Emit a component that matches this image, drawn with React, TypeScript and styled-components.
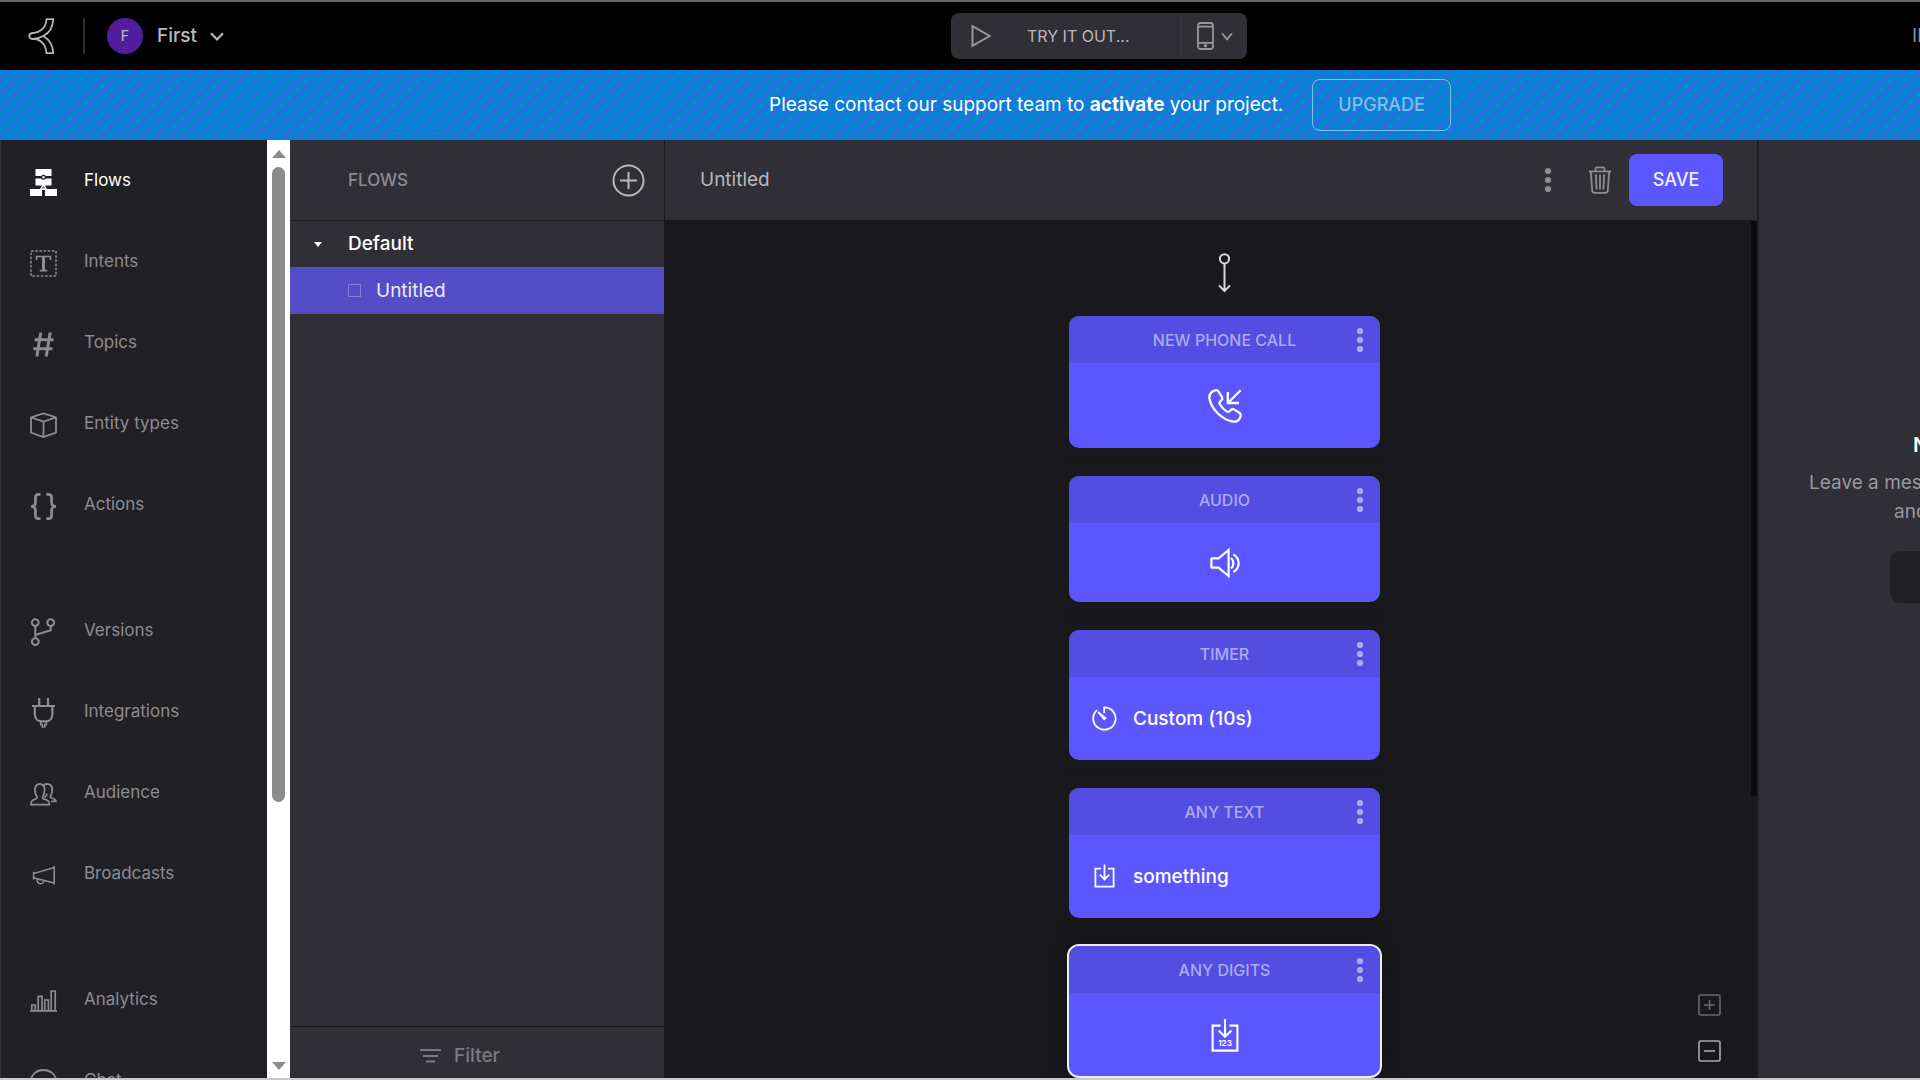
import React from 'react';
import styled, { createGlobalStyle, css } from 'styled-components';

const color = {
  black: '#000000',
  rail: '#212025',
  panel: '#302f35',
  canvas: '#19181c',
  line: '#19181d',
  muted: '#8d8c91',
  soft: '#b9b8bd',
  white: '#ffffff',
  accent: '#5c56ff',
  accentDark: '#534de1',
  selected: '#534dc8',
  banner: '#0086d1',
  stripe: '#2a6ee0',
};

const GlobalStyle = createGlobalStyle`
  * { box-sizing: border-box; }
  body {
    margin: 0;
    background: ${color.panel};
    font-family: Inter, "Liberation Sans", sans-serif;
    font-size: 17px;
    line-height: 24px;
    color: ${color.muted};
  }
  button, input { font: inherit; color: inherit; }
  button { border: 0; padding: 0; background: none; cursor: pointer; }
  svg { display: block; flex: none; }
`;

const Page = styled.div`
  display: flex;
  flex-direction: column;
  height: 100vh;
  overflow: hidden;
  border-top: 2px solid #66666a;
  border-bottom: 2px solid #c9c8ca;
`;

const TopBar = styled.header`
  display: flex;
  align-items: center;
  flex: none;
  height: 68px;
  background: ${color.black};
  overflow: hidden;
`;

const Brand = styled.div`
  display: flex;
  align-items: center;
  flex: 0 0 calc(50% - 9px);
  padding-left: 28px;
`;

const Divider = styled.span`
  width: 2px;
  height: 36px;
  margin: 0 22px 0 28px;
  background: #2c2b30;
`;

const ProjectButton = styled.button`
  display: flex;
  align-items: center;
  color: ${color.soft};
  font-size: 19px;
  font-weight: 500;
`;

const Avatar = styled.span`
  display: flex;
  align-items: center;
  justify-content: center;
  width: 36px;
  height: 36px;
  margin-right: 14px;
  border-radius: 50%;
  background: #511d9b;
  font-size: 14px;
`;

const ChevronGap = styled.span`
  margin-left: 13px;
`;

const TryGroup = styled.div`
  display: flex;
  flex: none;
  height: 46px;
  border-radius: 8px;
  background: ${color.panel};
  overflow: hidden;
`;

const TryButton = styled.button`
  display: flex;
  align-items: center;
  gap: 35px;
  width: 230px;
  padding-left: 20px;
  color: ${color.soft};
  font-size: 16px;

  svg { color: #98979c; }
`;

const DeviceButton = styled.button`
  display: flex;
  align-items: center;
  justify-content: center;
  gap: 7px;
  width: 66px;
  border-left: 1px solid #3a393f;
  color: #98979c;
`;

const Region = styled.div`
  flex: 0 0 8px;
  min-width: 0;
  margin-left: auto;
  white-space: nowrap;
  font-size: 19px;
`;

const Banner = styled.div`
  display: flex;
  align-items: center;
  justify-content: center;
  gap: 29px;
  flex: none;
  height: 70px;
  padding-left: 300px;
  color: ${color.white};
  font-size: 19px;
  background: repeating-linear-gradient(
    135deg,
    ${color.banner} 0 6px,
    ${color.stripe} 6px 10px
  );
`;

const UpgradeButton = styled.button`
  height: 52px;
  padding: 0 25px;
  border: 1px solid #80c2ea;
  border-radius: 8px;
  color: #80bfec;
  font-size: 18px;
  font-weight: 500;
`;

const Workspace = styled.div`
  display: flex;
  flex: 1;
  min-height: 0;
`;

const Rail = styled.aside`
  display: flex;
  flex: 0 0 290px;
  background: ${color.rail};
`;

const Nav = styled.nav`
  flex: 1;
  border-left: 1px solid #35343a;
  overflow: hidden;
`;

const NavGroup = styled.div`
  display: flex;
  flex-direction: column;
  margin-bottom: 45px;
`;

const NavLink = styled.a<{ $active?: boolean }>`
  display: flex;
  align-items: center;
  gap: 27px;
  height: 81px;
  padding: 0 0 1px 29px;
  color: ${(p) => (p.$active ? color.white : color.muted)};
  text-decoration: none;

  svg { margin-top: 4px; }
`;

const Scroller = styled.div`
  display: flex;
  flex-direction: column;
  align-items: center;
  width: 23px;
  padding: 10px 0 8px;
  background: ${color.white};
`;

const ScrollArrow = styled.span<{ $down?: boolean }>`
  border: 7px solid transparent;
  ${(p) =>
    p.$down
      ? css`border-top: 8px solid #8b8b8b; border-bottom: 0; margin-top: auto;`
      : css`border-bottom: 8px solid #8b8b8b; border-top: 0;`}
`;

const ScrollThumb = styled.span`
  width: 13px;
  height: 69%;
  margin-top: 9px;
  border-radius: 7px;
  background: #8b8b8b;
`;

const FlowsPanel = styled.section`
  display: flex;
  flex-direction: column;
  flex: 0 0 375px;
  background: ${color.panel};
  border-right: 1px solid ${color.line};
`;

const PanelHeader = styled.header`
  display: flex;
  align-items: center;
  justify-content: space-between;
  flex: none;
  height: 81px;
  padding: 0 19px 0 58px;
  border-bottom: 1px solid ${color.line};
`;

const PanelTitle = styled.h2`
  margin: 0;
  font-size: 17px;
  font-weight: 500;
`;

const AddButton = styled.button`
  color: ${color.soft};
`;

const FlowGroup = styled.button`
  display: flex;
  align-items: center;
  gap: 26px;
  height: 46px;
  padding-left: 24px;
  color: ${color.white};
  font-size: 19px;
  font-weight: 500;
`;

const FlowRow = styled.label`
  display: flex;
  align-items: center;
  gap: 15px;
  height: 47px;
  padding-left: 58px;
  background: ${color.selected};
  color: #ececf7;
  font-size: 19px;
`;

const FlowCheck = styled.input`
  appearance: none;
  width: 13px;
  height: 13px;
  margin: 0;
  border: 1px solid #837edc;
`;

const FilterButton = styled.button`
  display: flex;
  align-items: center;
  justify-content: center;
  gap: 13px;
  height: 52px;
  margin-top: auto;
  padding: 6px 34px 0 0;
  border-top: 1px solid ${color.line};
  color: #7b7a80;
  font-size: 19px;
  font-weight: 500;
`;

const Editor = styled.main`
  position: relative;
  display: flex;
  flex-direction: column;
  flex: 1;
  min-width: 0;
  background: ${color.canvas};
`;

const EditorHeader = styled.header`
  display: flex;
  align-items: center;
  flex: none;
  height: 80px;
  padding: 0 34px 0 35px;
  background: ${color.panel};
`;

const EditorTitle = styled.h1`
  flex: 1;
  margin: 0;
  color: ${color.soft};
  font-size: 19px;
  font-weight: 400;
`;

const ToolButton = styled.button`
  margin-right: 36px;
`;

const DeleteButton = styled.button`
  margin-right: 17px;
`;

const SaveButton = styled.button`
  width: 94px;
  height: 52px;
  border-radius: 8px;
  background: ${color.accent};
  color: #efeeff;
  font-size: 18px;
  font-weight: 500;
`;

const CanvasArea = styled.div`
  display: flex;
  justify-content: flex-end;
  flex: 1;
  min-height: 0;
  overflow: hidden;
`;

const NodeColumn = styled.div`
  display: flex;
  flex-direction: column;
  align-items: center;
  gap: 28px;
  flex: 1;
  padding: 33px 0 0 33px;
`;

const StartMark = styled.div`
  height: 35px;
  color: #d8d7da;
`;

const Node = styled.article<{ $selected?: boolean }>`
  flex: none;
  width: 311px;
  border-radius: 10px;
  background: ${color.accent};
  box-shadow: 0 0 16px rgba(30, 29, 30, 0.7);
  overflow: hidden;
  ${(p) => p.$selected && css`box-shadow: 0 0 0 2px #efeeee, 0 0 24px #111113;`}
`;

const NodeHead = styled.header`
  display: grid;
  grid-template-columns: 40px 1fr 40px;
  align-items: center;
  justify-items: center;
  height: 47px;
  background: ${color.accentDark};
  color: #aeaaf0;
`;

const NodeTitle = styled.h3`
  grid-column: 2;
  margin: 0;
  font-size: 16px;
  font-weight: 500;
`;

const NodeBody = styled.div<{ $height: number; $labelled?: boolean }>`
  display: flex;
  align-items: center;
  justify-content: ${(p) => (p.$labelled ? 'flex-start' : 'center')};
  gap: 16px;
  height: ${(p) => p.$height}px;
  padding: 0 23px;
  color: ${color.white};
  font-size: 19px;
  font-weight: 500;
`;

const CanvasThumb = styled.span`
  width: 6px;
  height: 67%;
  margin-top: 1px;
  background: #0b0a0f;
`;

const ZoomControls = styled.div`
  position: absolute;
  right: 36px;
  bottom: 16px;
  display: flex;
  flex-direction: column;
  gap: 24px;
`;

const ZoomButton = styled.button<{ $dim?: boolean }>`
  color: ${(p) => (p.$dim ? '#69686c' : '#a9a8ac')};
`;

const Comments = styled.aside`
  flex: 0 0 163px;
  padding-top: 290px;
  background: ${color.panel};
  border-left: 2px solid #222126;
  overflow: hidden;
  white-space: nowrap;
`;

const CommentsTitle = styled.h2`
  margin: 0 0 8px;
  padding-left: 154px;
  color: ${color.white};
  font-size: 20px;
  font-weight: 600;
  line-height: 30px;
`;

const CommentsLine = styled.p<{ $indent: number }>`
  margin: 0;
  padding-left: ${(p) => p.$indent}px;
  font-size: 19px;
  line-height: 29px;
  color: #9a999e;
`;

const CommentsButton = styled.button`
  display: block;
  width: 176px;
  height: 52px;
  margin: 25px 0 0 131px;
  border-radius: 10px;
  background: ${color.rail};
`;

type IconProps = { w: number; h: number; sw?: number; children: React.ReactNode };

const Icon = ({ w, h, sw = 2, children }: IconProps) => (
  <svg width={w} height={h} viewBox={`0 0 ${w} ${h}`} fill="none" stroke="currentColor" strokeWidth={sw} aria-hidden="true">
    {children}
  </svg>
);

const Logo = () => (
  <Icon w={27} h={37} sw={1.8}>
    <g stroke="#b4b4b4">
      <path d="M18.5 1.2H25.2C25 10 21 15 15.3 18C21 21.5 25 27 25.2 35.2H18.5C18 27 13 21.2 6 21H4.5C.2 20.6 .2 15.4 4.5 15C13 14.5 18 9 18.5 1.2Z" />
      <path d="M5 21C9 21 12.5 19.6 15.3 18" />
    </g>
  </Icon>
);

const Chevron = ({ w = 14, h = 9, sw = 2.2 }: { w?: number; h?: number; sw?: number }) => (
  <Icon w={w} h={h} sw={sw}>
    <path d={`M1 1.2L${w / 2} ${h - 1.6}L${w - 1} 1.2`} />
  </Icon>
);

const Dots = () => (
  <Icon w={8} h={26} sw={0}>
    <g fill="currentColor">
      <circle cx="4" cy="4" r="3.1" />
      <circle cx="4" cy="13" r="3.1" />
      <circle cx="4" cy="22" r="3.1" />
    </g>
  </Icon>
);

const navIcons = {
  flows: (
    <Icon w={27} h={27} sw={0}>
      <g fill="currentColor">
        <path d="M5.5 0H21.5V7H5.5ZM5.5 9.5H21.5V16.5H5.5ZM0 20H12V27H0ZM15 20H27V27H15Z" />
        <path d="M12.9 15H14.1L17 20H15V21H12V20H10Z" />
      </g>
      <circle cx="13.5" cy="8.3" r="1.9" fill="#fff" stroke="#212025" strokeWidth="1.2" />
      <path d="M13.5 16.8L15.3 19.4H11.7Z" fill="#77767b" />
    </Icon>
  ),
  intents: (
    <Icon w={27} h={27} sw={1.5}>
      <path d="M1 1H26V26H1Z" strokeDasharray="2.6 1.57" />
      <path d="M6.5 10V6.5H20.5V10M13.5 6.5V20.5M9.8 20.6H17.2" strokeWidth="1.6" />
      <path d="M13.5 6.5V20.5" strokeWidth="3" />
    </Icon>
  ),
  topics: (
    <Icon w={27} h={27} sw={2.9}>
      <path d="M10.8 1.5L6.8 25.5M20.2 1.5L16.2 25.5M4.6 8.8H23.6M3.4 17.8H22.4" />
    </Icon>
  ),
  entity: (
    <Icon w={27} h={27} sw={1.8}>
      <path d="M13.5 1.4L26 5.4V20.6L13.5 25L1 20.6V5.4ZM1 5.4L13.5 9.6L26 5.4M13.5 9.6V25" />
    </Icon>
  ),
  actions: (
    <Icon w={27} h={27} sw={2.7}>
      <path d="M10.6 1.4H8.6Q5.4 1.4 5.4 4.6V9.8Q5.4 13.4 1 13.5Q5.4 13.6 5.4 17.2V22.4Q5.4 25.6 8.6 25.6H10.6M16.4 1.4H18.4Q21.6 1.4 21.6 4.6V9.8Q21.6 13.4 26 13.5Q21.6 13.6 21.6 17.2V22.4Q21.6 25.6 18.4 25.6H16.4" />
    </Icon>
  ),
  versions: (
    <Icon w={27} h={28} sw={2}>
      <circle cx="5.3" cy="4.6" r="3.4" />
      <circle cx="20.7" cy="4.6" r="3.4" />
      <circle cx="5.3" cy="23.6" r="3.4" />
      <path d="M5.3 8V20.2M20.7 8V12.2L5.3 17" />
    </Icon>
  ),
  integrations: (
    <Icon w={27} h={30} sw={2.2}>
      <path d="M9.2 0V7.5M18 0V7.5M2 8H25M4.8 8V15.5C4.8 20.5 7.6 23.3 11 23.3H16.2C19.6 23.3 22.4 20.5 22.4 15.5V8" />
      <path d="M10.8 23.6V26.6H12.4V29H14.8V26.6H16.4V23.6" strokeWidth="1.6" />
    </Icon>
  ),
  audience: (
    <Icon w={27} h={23} sw={1.8}>
      <path d="M1 21.6C1 18 2 17.4 5.4 16.2C7 15.6 7.4 14.8 6.8 13.6C5.4 11.6 5 9.4 5 6.8C5 3 6.6 1 9.8 1S14.6 3 14.6 6.8C14.6 9.4 14.2 11.6 12.8 13.6C12.2 14.8 12.6 15.6 14.2 16.2C18.4 17.4 19.4 18.4 19.4 21.6Z" />
      <path d="M13.8 2.2C14.8 1.3 16 1 17.4 1C20.6 1 22.2 3 22.2 6.8C22.2 9 21.8 11.2 20.6 12.8C20 14 20.4 14.6 21.8 15C25 16 26 16.6 26 18.4H21M16.6 10.6C17 13 15.6 14 14.4 14" />
    </Icon>
  ),
  broadcasts: (
    <Icon w={27} h={19} sw={1.6}>
      <path d="M24.2 0V18.6M24.2 1.6L3.6 7.6V11.8L24.2 17M3.6 5.8V13.4M6.9 12.6C6.9 19.4 14 19 13.8 14.4" />
    </Icon>
  ),
  analytics: (
    <Icon w={27} h={22} sw={1.7}>
      <path d="M0 20.8H27M1.8 20.8V15H5.2V20.8M8.2 20.8V6.4H12V20.8M14.8 20.8V10H18.4V20.8M21.2 20.8V1H25.2V20.8" />
    </Icon>
  ),
  chat: (
    <Icon w={27} h={27} sw={1.8}>
      <ellipse cx="13.5" cy="11.5" rx="12.5" ry="10.5" />
      <path d="M7 21L6 26L12 22" />
    </Icon>
  ),
};

type NavEntry = { label: string; icon: keyof typeof navIcons; active?: boolean };

const navGroups: NavEntry[][] = [
  [
    { label: 'Flows', icon: 'flows', active: true },
    { label: 'Intents', icon: 'intents' },
    { label: 'Topics', icon: 'topics' },
    { label: 'Entity types', icon: 'entity' },
    { label: 'Actions', icon: 'actions' },
  ],
  [
    { label: 'Versions', icon: 'versions' },
    { label: 'Integrations', icon: 'integrations' },
    { label: 'Audience', icon: 'audience' },
    { label: 'Broadcasts', icon: 'broadcasts' },
  ],
  [
    { label: 'Analytics', icon: 'analytics' },
    { label: 'Chat', icon: 'chat' },
  ],
];

const PhoneCallIcon = () => (
  <Icon w={34} h={34} sw={2.3}>
    <path d="M7.4 1.3C8.8 .9 9.8 1.4 10.6 2.6L14 8.2C14.8 9.6 14.2 10.6 13 11.6C11.4 12.8 11 14 12.2 15.8C13.8 18.6 15.8 20.6 18.6 22.4C20.2 23.4 21.2 23 22.4 21.6C23.4 20.2 24.6 19.6 26 20.4L31.6 24C32.6 24.8 33 25.8 32.6 27.2C31.6 31 28.8 33 25 32.6C13.8 30.6 3.2 20 1.4 9.2C1.2 5 3.4 2.2 7.4 1.3Z" />
    <path d="M32.6 1.2L20.6 13.2M19.8 3V14H31" />
  </Icon>
);

const SpeakerIcon = () => (
  <Icon w={30} h={30} sw={2.2}>
    <path d="M2 10.4H8.6L18.6 2V28L8.6 19.6H2Q1.4 19.6 1.4 19V11Q1.4 10.4 2 10.4Z" />
    <path d="M21 10C24.2 12.6 24.2 17.6 21 20.4M23.4 6.4C30.4 10.8 30.4 19.6 23.4 24" />
  </Icon>
);

const TimerIcon = () => (
  <Icon w={25} h={25} sw={1.8}>
    <path d="M12.2 7V1.3A11.2 11.2 0 1 1 4.9 4.2" />
    <path d="M6.2 6.2L12.2 13.2L13.4 12L6.2 6.2Z" fill="currentColor" />
  </Icon>
);

const InboxIcon = () => (
  <Icon w={25} h={25} sw={1.8}>
    <path d="M9 4.6H3.4V22.6H21.6V4.6H16M12.5 .6V15M7.8 10.6L12.5 15.4L17.2 10.6" />
  </Icon>
);

const DigitsText = styled.text`
  font-size: 8px;
  font-weight: 700;
  text-anchor: middle;
`;

const DigitsIcon = () => (
  <Icon w={28} h={34} sw={2.1}>
    <path d="M9.6 7.6H1.6V32.6H26.4V7.6H18.4M14 1V18M7.6 12.4L14 18.8L20.4 12.4" />
    <DigitsText x="14" y="28" fill="currentColor" stroke="none">123</DigitsText>
  </Icon>
);

type FlowNode = { title: string; height: number; icon: React.ReactNode; label?: string; selected?: boolean };

const flowNodes: FlowNode[] = [
  { title: 'NEW PHONE CALL', height: 85, icon: <PhoneCallIcon /> },
  { title: 'AUDIO', height: 79, icon: <SpeakerIcon /> },
  { title: 'TIMER', height: 83, icon: <TimerIcon />, label: 'Custom (10s)' },
  { title: 'ANY TEXT', height: 83, icon: <InboxIcon />, label: 'something' },
  { title: 'ANY DIGITS', height: 83, icon: <DigitsIcon />, selected: true },
];

export default function App() {
  return (
    <>
      <GlobalStyle />
      <Page>
        <TopBar>
          <Brand>
            <Logo />
            <Divider />
            <ProjectButton>
              <Avatar>F</Avatar>
              First
              <ChevronGap><Chevron /></ChevronGap>
            </ProjectButton>
          </Brand>
          <TryGroup>
            <TryButton>
              <Icon w={21} h={24}><path d="M1.5 2.2L18.6 12L1.5 21.8Z" /></Icon>
              TRY IT OUT...
            </TryButton>
            <DeviceButton aria-label="Device">
              <Icon w={17} h={28} sw={1.8}>
                <rect x="1" y="1" width="15" height="26" rx="2.5" />
                <path d="M1 4.6H16M1 20.8H16" />
                <circle cx="8.5" cy="23.8" r=".8" />
              </Icon>
              <Chevron w={12} h={9} sw={1.8} />
            </DeviceButton>
          </TryGroup>
          <Region>IP</Region>
        </TopBar>

        <Banner>
          <span>Please contact our support team to <strong>activate</strong> your project.</span>
          <UpgradeButton>UPGRADE</UpgradeButton>
        </Banner>

        <Workspace>
          <Rail>
            <Nav>
              {navGroups.map((group) => (
                <NavGroup key={group[0].label}>
                  {group.map((item) => (
                    <NavLink key={item.label} href="#" $active={item.active}>
                      {navIcons[item.icon]}
                      {item.label}
                    </NavLink>
                  ))}
                </NavGroup>
              ))}
            </Nav>
            <Scroller>
              <ScrollArrow />
              <ScrollThumb />
              <ScrollArrow $down />
            </Scroller>
          </Rail>

          <FlowsPanel>
            <PanelHeader>
              <PanelTitle>FLOWS</PanelTitle>
              <AddButton aria-label="Add flow">
                <Icon w={33} h={33}>
                  <circle cx="16.5" cy="16.5" r="15" />
                  <path d="M16.5 8V25M8 16.5H25" />
                </Icon>
              </AddButton>
            </PanelHeader>
            <FlowGroup>
              <Icon w={8} h={5} sw={0}><path d="M0 0H8L4 5Z" fill="currentColor" /></Icon>
              Default
            </FlowGroup>
            <FlowRow>
              <FlowCheck type="checkbox" />
              Untitled
            </FlowRow>
            <FilterButton>
              <Icon w={21} h={15}><path d="M0 2H21M3 8H18M6 13.5H15" /></Icon>
              Filter
            </FilterButton>
          </FlowsPanel>

          <Editor>
            <EditorHeader>
              <EditorTitle>Untitled</EditorTitle>
              <ToolButton aria-label="More"><Dots /></ToolButton>
              <DeleteButton aria-label="Delete">
                <Icon w={24} h={28} sw={1.8}>
                  <path d="M.6 5.4H23.4M7.6 5V2.6Q7.6 1.4 8.8 1.4H15.2Q16.4 1.4 16.4 2.6V5M2.8 5.4L4.2 24.4Q4.4 26.8 6.8 26.8H17.2Q19.6 26.8 19.8 24.4L21.2 5.4" />
                  <path d="M7.8 8.4L8.6 23.4M12 8.4V23.4M16.2 8.4L15.4 23.4" />
                </Icon>
              </DeleteButton>
              <SaveButton>SAVE</SaveButton>
            </EditorHeader>
            <CanvasArea>
              <NodeColumn>
                <StartMark>
                  <Icon w={13} h={40} sw={2}>
                    <circle cx="6.5" cy="5.8" r="4.6" />
                    <path d="M6.5 10.4V38M1 32.4L6.5 38L12 32.4" />
                  </Icon>
                </StartMark>
                {flowNodes.map((node) => (
                  <Node key={node.title} $selected={node.selected}>
                    <NodeHead>
                      <NodeTitle>{node.title}</NodeTitle>
                      <button aria-label={`${node.title} menu`}><Dots /></button>
                    </NodeHead>
                    <NodeBody $height={node.height} $labelled={!!node.label}>
                      {node.icon}
                      {node.label}
                    </NodeBody>
                  </Node>
                ))}
              </NodeColumn>
              <CanvasThumb />
            </CanvasArea>
            <ZoomControls>
              <ZoomButton $dim aria-label="Zoom in">
                <Icon w={23} h={22} sw={1.6}>
                  <rect x="1" y="1" width="21" height="20" rx="1.5" />
                  <path d="M11.5 6V16M6 11H17" />
                </Icon>
              </ZoomButton>
              <ZoomButton aria-label="Zoom out">
                <Icon w={23} h={22} sw={1.6}>
                  <rect x="1" y="1" width="21" height="20" rx="1.5" />
                  <path d="M6 11H17" />
                </Icon>
              </ZoomButton>
            </ZoomControls>
          </Editor>

          <Comments>
            <CommentsTitle>N</CommentsTitle>
            <CommentsLine $indent={50}>Leave a mess</CommentsLine>
            <CommentsLine $indent={135}>and</CommentsLine>
            <CommentsButton aria-label="Leave a message" />
          </Comments>
        </Workspace>
      </Page>
    </>
  );
}
